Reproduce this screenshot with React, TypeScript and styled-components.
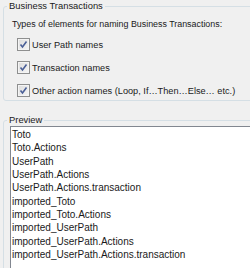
import React, { FC } from 'react';
import styled, { createGlobalStyle } from 'styled-components';

const GlobalStyle = createGlobalStyle`
  html, body {
    margin: 0;
    padding: 0;
    background: #f0f0f0;
    overflow: hidden;
  }
  body {
    font-family: "Liberation Sans", Arial, sans-serif;
    font-size: 9px;
    color: #1a1a1a;
  }
`;

const Page = styled.div`
  width: 250px;
  height: 268px;
  overflow: hidden;
  padding-left: 3px;
  box-sizing: border-box;
`;

const GroupBox = styled.fieldset<{ $height?: number }>`
  margin: 0;
  width: 262px;
  height: ${(p) => (p.$height ? `${p.$height}px` : 'auto')};
  box-sizing: border-box;
  border: 1px solid #d5dfe5;
  border-radius: 3px;
  padding: 0 0 0 6px;
  & + & {
    margin-top: 13px;
  }
`;

const Legend = styled.legend`
  padding: 0 2px;
  margin-left: -3px;
  line-height: 12px;
  font-size: 9.4px;
`;

const Caption = styled.div`
  margin: 5px 0 0 2px;
  line-height: 14px;
  font-size: 8.9px;
`;

const Options = styled.div`
  display: flex;
  flex-direction: column;
  gap: 10px;
  margin: 7px 0 0 7px;
`;

const OptionRow = styled.label`
  display: flex;
  align-items: center;
  gap: 2px;
  height: 13px;
  font-size: 9.2px;
`;

const Box = styled.span`
  width: 11px;
  height: 11px;
  border: 1px solid #8e8f8f;
  background: linear-gradient(135deg, #dcdcdc 0%, #f6f6f6 100%);
  display: flex;
  align-items: center;
  justify-content: center;
  box-shadow: inset 0 0 0 1px #f4f4f4;
`;

const ListBox = styled.div`
  margin-top: 0;
  height: 160px;
  background: #fff;
  border: 1px solid #828790;
  padding: 1px 0 0 1px;
  font-size: 10px;
`;

const ListItem = styled.div`
  height: 13.33px;
  line-height: 13.33px;
  white-space: nowrap;
`;

const CheckMark: FC = () => (
  <svg width="9" height="9" viewBox="0 0 9 9">
    <path d="M1.5 4.5 L3.5 7 L7.5 1.5" fill="none" stroke="#4a5f97" strokeWidth="1.6" />
  </svg>
);

const options = [
  'User Path names',
  'Transaction names',
  'Other action names (Loop, If…Then…Else… etc.)',
];

const previewItems = [
  'Toto',
  'Toto.Actions',
  'UserPath',
  'UserPath.Actions',
  'UserPath.Actions.transaction',
  'imported_Toto',
  'imported_Toto.Actions',
  'imported_UserPath',
  'imported_UserPath.Actions',
  'imported_UserPath.Actions.transaction',
];

const App: FC = () => (
  <Page>
    <GlobalStyle />
    <GroupBox $height={101}>
      <Legend>Business Transactions</Legend>
      <Caption>Types of elements for naming Business Transactions:</Caption>
      <Options>
        {options.map((o) => (
          <OptionRow key={o}>
            <Box>
              <CheckMark />
            </Box>
            {o}
          </OptionRow>
        ))}
      </Options>
    </GroupBox>
    <GroupBox>
      <Legend>Preview</Legend>
      <ListBox>
        {previewItems.map((i) => (
          <ListItem key={i}>{i}</ListItem>
        ))}
      </ListBox>
    </GroupBox>
  </Page>
);

export default App;
